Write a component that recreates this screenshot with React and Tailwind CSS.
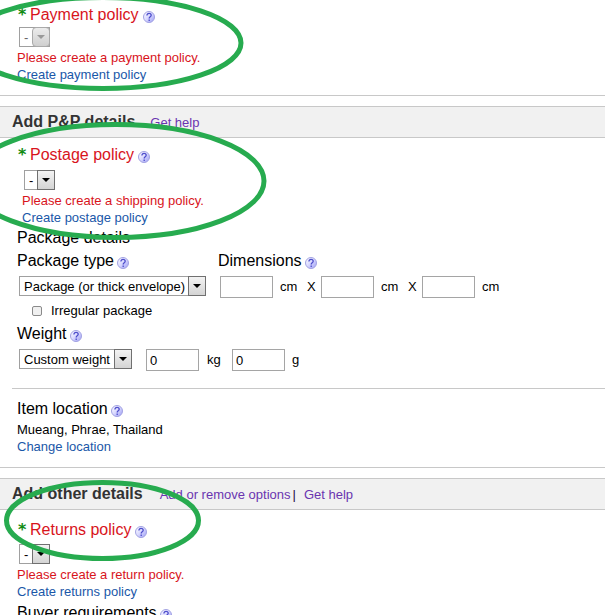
import { useId } from 'react'

function HelpButton({ topic }) {
  const gradient = useId()
  return (
    <button type="button" aria-label={`Help with ${topic}`} className="mt-1 h-3 w-3 shrink-0">
      <svg viewBox="0 0 12 12" className="h-3 w-3" aria-hidden="true">
        <defs>
          <linearGradient id={gradient} x1="0" y1="0" x2="1" y2="1">
            <stop offset="0" stopColor="#ffffff" />
            <stop offset="0.45" stopColor="#dcdcff" />
            <stop offset="1" stopColor="#9c9cf4" />
          </linearGradient>
        </defs>
        <circle cx="6" cy="6" r="5.5" fill={`url(#${gradient})`} stroke="#a2a2e2" />
        <path
          d="M3.9 4.6C3.9 3 4.8 2.4 6 2.4S8.2 3 8.2 4.3C8.2 5.7 6.2 5.8 6.2 7.4M6.2 8.4V9.9"
          fill="none"
          stroke="#4e4ecb"
          strokeWidth="1.3"
        />
      </svg>
    </button>
  )
}

function SelectBox({ label, text, disabled = false, className = '' }) {
  return (
    <div className={`relative flex h-5 ${className}`}>
      <select
        aria-label={label}
        disabled={disabled}
        className="w-full appearance-none border border-[#a0a0a0] bg-white pt-px pl-1 text-[13px] leading-4 text-black disabled:text-[#666] disabled:opacity-100"
      >
        <option>{text}</option>
      </select>
      <span
        className={`pointer-events-none absolute inset-y-0 right-0 flex w-[18px] items-center justify-center border bg-linear-to-b ${
          disabled
            ? 'rounded-sm border-[#aaa] from-[#ececec] to-[#cfcfcf] text-[#999]'
            : 'border-[#707070] from-[#f3f3f3] to-[#d4d4d4] text-black'
        }`}
      >
        <svg viewBox="0 0 8 4" className="h-1 w-2" aria-hidden="true">
          <path d="M0 0H8L4 4Z" fill="currentColor" />
        </svg>
      </span>
    </div>
  )
}

function NumberBox({ label, value = '' }) {
  return (
    <input
      type="text"
      aria-label={label}
      defaultValue={value}
      className="h-[22px] w-[53px] border border-[#a5a5a5] bg-white px-[3px] text-[13px]"
    />
  )
}

function FieldTitle({ children, topic }) {
  return (
    <div className="flex h-5 items-center gap-[3px]">
      <h3 className="text-base leading-5">{children}</h3>
      {topic && <HelpButton topic={topic} />}
    </div>
  )
}

function RequiredTitle({ children }) {
  return (
    <div className="flex h-5 items-center">
      <span className="w-[13px] pl-px font-['DejaVu_Sans',sans-serif] text-base leading-5 font-bold text-[#118a11]">*</span>
      <h3 className="mr-1 text-base leading-5 text-[#d8141c]">{children}</h3>
      <HelpButton topic={children} />
    </div>
  )
}

function PolicyMessage({ error, link }) {
  return (
    <div className="leading-[17px]">
      <p className="text-[#d8141c]">{error}</p>
      <a href="#" className="block w-fit text-[#1a57a8]">{link}</a>
    </div>
  )
}

function SectionHeader({ title, children }) {
  return (
    <header className="flex h-8 items-baseline border-y border-[#c8c8c8] bg-[#f1f1f1] pt-[5px] pl-3">
      <h2 className="text-base leading-5 font-bold text-[#333]">{title}</h2>
      {children}
    </header>
  )
}

// Hand-drawn style rings that point out the missing policies
function HighlightRings() {
  return (
    <svg
      width="280"
      height="615"
      viewBox="0 0 280 615"
      className="pointer-events-none absolute top-0 left-0"
      fill="none"
      stroke="#27ab4f"
      strokeWidth="5"
      aria-hidden="true"
    >
      <ellipse cx="103" cy="43" rx="138" ry="45.5" />
      <ellipse cx="116" cy="181" rx="148" ry="56.5" />
      <ellipse cx="102.5" cy="520.5" rx="96" ry="38" />
    </svg>
  )
}

export default function App() {
  return (
    <main className="relative h-screen overflow-hidden bg-white font-['Liberation_Sans',Arial,sans-serif] text-[13px] text-black">
      <section className="border-b border-[#c8c8c8] pt-[5px] pb-3 pl-[17px]">
        <RequiredTitle>Payment policy</RequiredTitle>
        <SelectBox label="Payment policy" text="-" disabled className="mt-[2px] mb-[2px] ml-[2px] w-[31px]" />
        <PolicyMessage error="Please create a payment policy." link="Create payment policy" />
      </section>

      <section className="mt-[10px] border-b border-[#c8c8c8]">
        <SectionHeader title="Add P&P details">
          <a href="#" className="ml-[15px] text-[#6a35b0]">Get help</a>
        </SectionHeader>

        <div className="pt-[7px] pl-[17px]">
          <RequiredTitle>Postage policy</RequiredTitle>
          <div className="mt-[5px] pl-[5px]">
            <SelectBox label="Postage policy" text="-" className="mb-[2px] ml-[2px] w-[31px]" />
            <PolicyMessage error="Please create a shipping policy." link="Create postage policy" />
          </div>

          <h3 className="mt-[2px] text-base leading-5">Package details</h3>
          <div className="mt-[3px] flex">
            <div className="w-[201px]">
              <FieldTitle topic="Package type">Package type</FieldTitle>
              <SelectBox label="Package type" text="Package (or thick envelope)" className="mt-[5px] ml-[2px] w-[187px]" />
              <label className="mt-[7px] ml-[15px] flex h-4 items-center gap-[9px]">
                <input
                  type="checkbox"
                  className="h-[10px] w-[10px] appearance-none rounded-xs border border-[#8a8a8a] bg-[#f0f0f0]"
                />
                Irregular package
              </label>
            </div>
            <div>
              <FieldTitle topic="Dimensions">Dimensions</FieldTitle>
              <div className="mt-[5px] ml-[2px] flex items-center">
                <NumberBox label="Length" />
                <span className="w-[34px] pl-[7px]">cm</span>
                <span className="w-[14px]">X</span>
                <NumberBox label="Width" />
                <span className="w-[34px] pl-[7px]">cm</span>
                <span className="w-[14px]">X</span>
                <NumberBox label="Height" />
                <span className="pl-[7px]">cm</span>
              </div>
            </div>
          </div>

          <div className="mt-[5px]">
            <FieldTitle topic="Weight">Weight</FieldTitle>
            <div className="mt-[5px] ml-[2px] flex items-start">
              <SelectBox label="Weight" text="Custom weight" className="mr-[14px] w-[113px]" />
              <NumberBox label="Kilograms" value="0" />
              <span className="w-[33px] pl-2 leading-[22px]">kg</span>
              <NumberBox label="Grams" value="0" />
              <span className="pl-[7px] leading-[22px]">g</span>
            </div>
          </div>
        </div>

        <div className="mt-[17px] ml-3 border-t border-[#c8c8c8] pt-[10px] pb-3 pl-[5px]">
          <FieldTitle topic="Item location">Item location</FieldTitle>
          <p className="mt-[3px] leading-4">Mueang, Phrae, Thailand</p>
          <a href="#" className="block w-fit leading-[17px] text-[#1a57a8]">Change location</a>
        </div>
      </section>

      <section className="mt-[10px]">
        <SectionHeader title="Add other details">
          <a href="#" className="ml-[17px] text-[#6a35b0]">Add or remove options</a>
          <span className="ml-[2px] text-[#221144]">|</span>
          <a href="#" className="ml-2 text-[#6a35b0]">Get help</a>
        </SectionHeader>

        <div className="pt-[10px] pl-[17px]">
          <RequiredTitle>Returns policy</RequiredTitle>
          <SelectBox label="Returns policy" text="-" className="mt-1 mb-[2px] ml-[2px] w-[31px]" />
          <PolicyMessage error="Please create a return policy." link="Create returns policy" />
          <div className="mt-[3px]">
            <FieldTitle topic="Buyer requirements">Buyer requirements</FieldTitle>
          </div>
        </div>
      </section>

      <HighlightRings />
    </main>
  )
}
